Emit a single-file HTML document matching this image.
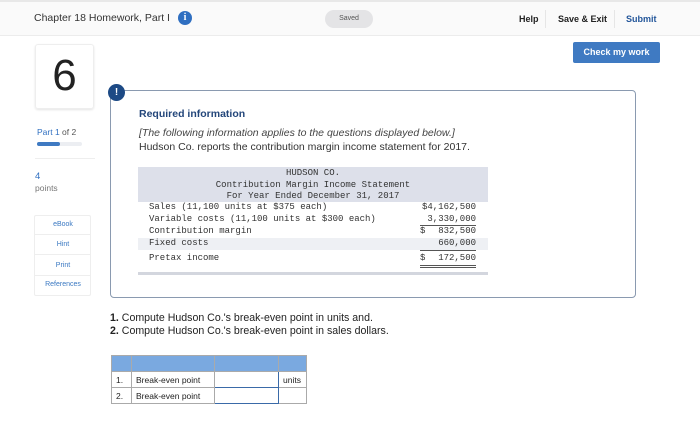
<!DOCTYPE html>
<html><head><meta charset="utf-8"><style>
*{margin:0;padding:0;box-sizing:border-box}
body{width:700px;height:442px;background:#fff;font-family:"Liberation Sans",sans-serif;position:relative;overflow:hidden;color:#222}
.a{position:absolute;white-space:nowrap}
.hdr{position:absolute;left:0;top:0;width:700px;height:36px;background:#fafafa;border-top:2px solid #e8e8e8;border-bottom:1px solid #ececec}
.mono{font-family:"Liberation Mono","DejaVu Sans Mono",monospace;font-size:9px;color:#333}
.side{position:absolute;left:35px;width:56px;height:20px;border-bottom:1px solid #eee;text-align:center;font-size:7px;color:#3a78c2;line-height:20px}
td{border:1px solid #aaa;font-size:8.5px;height:16px;padding-left:4px}
</style></head><body>
<div class="hdr"></div>
<div class="a" style="left:34px;top:12px;font-size:10.5px;color:#333">Chapter 18 Homework, Part I</div>
<div class="a" style="left:178px;top:11px;width:14px;height:14px;border-radius:50%;background:#2f6fc1;color:#fff;font-size:10px;font-weight:bold;text-align:center;line-height:14px;font-family:'Liberation Serif',serif">i</div>
<div class="a" style="left:325px;top:10px;width:48px;height:18px;border-radius:9px;background:#e4e4e6;font-size:7px;color:#555;text-align:center;line-height:18px">Saved</div>
<div class="a" style="left:519px;top:14px;font-size:9px;font-weight:bold;color:#222">Help</div>
<div class="a" style="left:545px;top:10px;width:1px;height:18px;background:#e6e6e6"></div>
<div class="a" style="left:558px;top:14px;font-size:9px;font-weight:bold;color:#222">Save &amp; Exit</div>
<div class="a" style="left:614px;top:10px;width:1px;height:18px;background:#e6e6e6"></div>
<div class="a" style="left:626px;top:14px;font-size:9px;font-weight:bold;color:#23569a">Submit</div>
<div class="a" style="left:573px;top:42px;width:87px;height:21px;background:#3f7ac2;border-radius:2px;color:#fff;font-size:9px;font-weight:bold;text-align:center;line-height:21px">Check my work</div>

<div class="a" style="left:35px;top:44px;width:59px;height:65px;border:1px solid #eee;border-radius:3px;box-shadow:0 1px 2px #e4e4e4;font-size:44px;text-align:center;line-height:62px;color:#222">6</div>
<div class="a" style="left:37px;top:127px;font-size:8.5px;color:#555"><b style="color:#2f6fc1;font-weight:normal">Part 1</b> of 2</div>
<div class="a" style="left:37px;top:142px;width:45px;height:4px;background:#eceef2;border-radius:2px"></div>
<div class="a" style="left:37px;top:142px;width:23px;height:4px;background:#3f7ac2;border-radius:2px"></div>
<div class="a" style="left:35px;top:158px;width:60px;height:1px;background:#eee"></div>
<div class="a" style="left:35px;top:171px;font-size:9.5px;color:#2f6fc1">4</div>
<div class="a" style="left:35px;top:183px;font-size:8.5px;color:#777">points</div>
<div class="a" style="left:34px;top:215px;width:57px;height:81px;border:1px solid #eee;border-radius:2px"></div>
<div class="side" style="top:215px">eBook</div>
<div class="side" style="top:235px">Hint</div>
<div class="side" style="top:256px">Print</div>
<div class="side" style="top:275px;border:none">References</div>

<div class="a" style="left:110px;top:90px;width:526px;height:208px;border:1.5px solid #8a9ab0;border-radius:4px"></div>
<div class="a" style="left:108px;top:84px;width:17px;height:17px;border-radius:50%;background:#1d4a85;color:#fff;font-size:10px;font-weight:bold;text-align:center;line-height:17px">!</div>
<div class="a" style="left:139px;top:108px;font-size:10.5px;font-weight:bold;color:#23467a">Required information</div>
<div class="a" style="left:139px;top:127px;font-size:10.5px;font-style:italic;color:#444">[The following information applies to the questions displayed below.]</div>
<div class="a" style="left:139px;top:141px;font-size:10.5px;color:#333">Hudson Co. reports the contribution margin income statement for 2017.</div>

<div class="a" style="left:138px;top:167px;width:350px;height:35px;background:#dde0ea"></div>
<div class="a mono" style="left:138px;top:168px;width:350px;text-align:center;line-height:11.5px">HUDSON CO.<br>Contribution Margin Income Statement<br>For Year Ended December 31, 2017</div>
<div class="a" style="left:138px;top:238px;width:350px;height:12px;background:#eef0f4"></div>
<div class="a mono" style="left:149px;top:202px">Sales (11,100 units at $375 each)</div>
<div class="a mono" style="left:149px;top:214px">Variable costs (11,100 units at $300 each)</div>
<div class="a mono" style="left:149px;top:226px">Contribution margin</div>
<div class="a mono" style="left:149px;top:238px">Fixed costs</div>
<div class="a mono" style="left:149px;top:253px">Pretax income</div>
<div class="a mono" style="left:420px;top:202px;width:56px;text-align:right">$4,162,500</div>
<div class="a mono" style="left:420px;top:214px;width:56px;text-align:right">3,330,000</div>
<div class="a" style="left:420px;top:225px;width:56px;height:1px;background:#555"></div>
<div class="a mono" style="left:420px;top:226px;width:56px">$</div>
<div class="a mono" style="left:420px;top:226px;width:56px;text-align:right">832,500</div>
<div class="a mono" style="left:420px;top:238px;width:56px;text-align:right">660,000</div>
<div class="a" style="left:420px;top:250px;width:56px;height:1px;background:#555"></div>
<div class="a mono" style="left:420px;top:253px;width:56px">$</div>
<div class="a mono" style="left:420px;top:253px;width:56px;text-align:right">172,500</div>
<div class="a" style="left:420px;top:265px;width:56px;height:3px;border-top:1px solid #555;border-bottom:1px solid #555"></div>
<div class="a" style="left:138px;top:272px;width:350px;height:3px;background:#d3d6de"></div>

<div class="a" style="left:110px;top:312px;font-size:10.6px;color:#222"><b>1.</b> Compute Hudson Co.'s break-even point in units and.</div>
<div class="a" style="left:110px;top:325px;font-size:10.6px;color:#222"><b>2.</b> Compute Hudson Co.'s break-even point in sales dollars.</div>

<table class="a" style="left:111px;top:355px;border-collapse:collapse;width:196px">
<tr style="background:#7aa9e0"><td style="width:20px"></td><td style="width:83px"></td><td style="width:64px"></td><td></td></tr>
<tr><td>1.</td><td>Break-even point</td><td style="border:1.5px solid #3a6aa8"></td><td>units</td></tr>
<tr><td>2.</td><td>Break-even point</td><td style="border:1.5px solid #3a6aa8"></td><td></td></tr>
</table>
</body></html>
